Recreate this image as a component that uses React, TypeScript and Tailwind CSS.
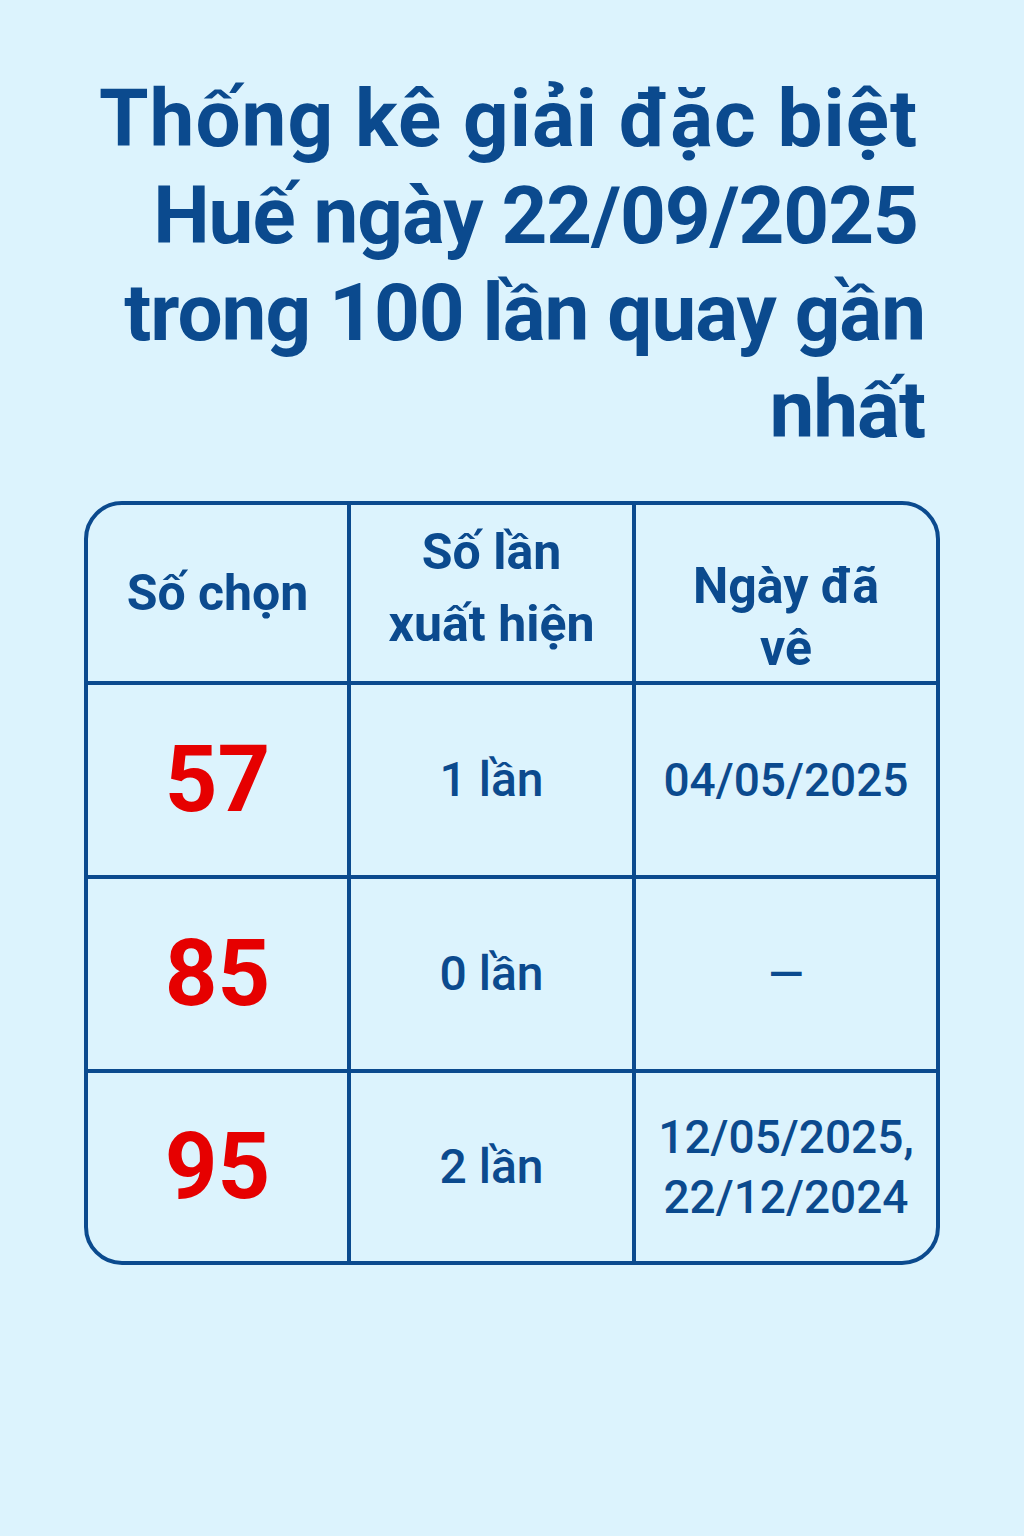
import React from "react";

const rows = [
  { num: "57", count: "1 lần", dates: ["04/05/2025"] },
  { num: "85", count: "0 lần", dates: ["—"] },
  { num: "95", count: "2 lần", dates: ["12/05/2025,", "22/12/2024"] },
];

export default function App() {
  return (
    <div className="min-h-[1536px] w-[1024px] bg-[#dcf3fd] text-[#0b4a8e] font-['Roboto',sans-serif]">
      {/* Title */}
      <h1 className="pt-[71px] pr-[99px] text-right text-[80px] leading-[97px] font-bold tracking-[-1px]">
        <span className="block pr-[7px] tracking-[1px]">Thống kê giải đặc biệt</span>
        <span className="block pr-[7px]">Huế ngày 22/09/2025</span>
        <span className="block">trong 100 lần quay gần</span>
        <span className="block">nhất</span>
      </h1>

      {/* Table */}
      <div className="mt-[42px] ml-[84px] w-[856px] rounded-[38px] border-4 border-[#0b4a8e] overflow-hidden">
        <div className="grid grid-cols-[263px_285px_1fr]">
          <div className="h-[180px] border-r-4 border-b-4 border-[#0b4a8e] flex items-center justify-center text-[50px] font-bold">
            Số chọn
          </div>
          <div className="h-[180px] border-r-4 border-b-4 border-[#0b4a8e] flex flex-col items-center justify-center pb-[10px] text-[50px] font-bold leading-[72px] text-center">
            <span>Số lần</span>
            <span>xuất hiện</span>
          </div>
          <div className="h-[180px] border-b-4 border-[#0b4a8e] flex flex-col items-center justify-center pt-[48px] text-[50px] font-bold leading-[62px] text-center">
            <span>Ngày đã</span>
            <span>vê</span>
          </div>

          {rows.map((r, i) => {
            const last = i === rows.length - 1;
            const b = last ? "h-[188px]" : "h-[194px] border-b-4";
            return (
              <React.Fragment key={r.num}>
                <div className={`${b} border-r-4 border-[#0b4a8e] flex items-center justify-center text-[92px] font-bold text-[#e60000]`}>
                  {r.num}
                </div>
                <div className={`${b} border-r-4 border-[#0b4a8e] flex items-center justify-center text-[48px] font-medium`}>
                  {r.count}
                </div>
                <div className={`${b} border-[#0b4a8e] flex flex-col items-center justify-center text-[46px] font-medium leading-[60px] text-center`}>
                  {r.dates.map((d) => (
                    <span key={d}>{d}</span>
                  ))}
                </div>
              </React.Fragment>
            );
          })}
        </div>
      </div>
    </div>
  );
}
